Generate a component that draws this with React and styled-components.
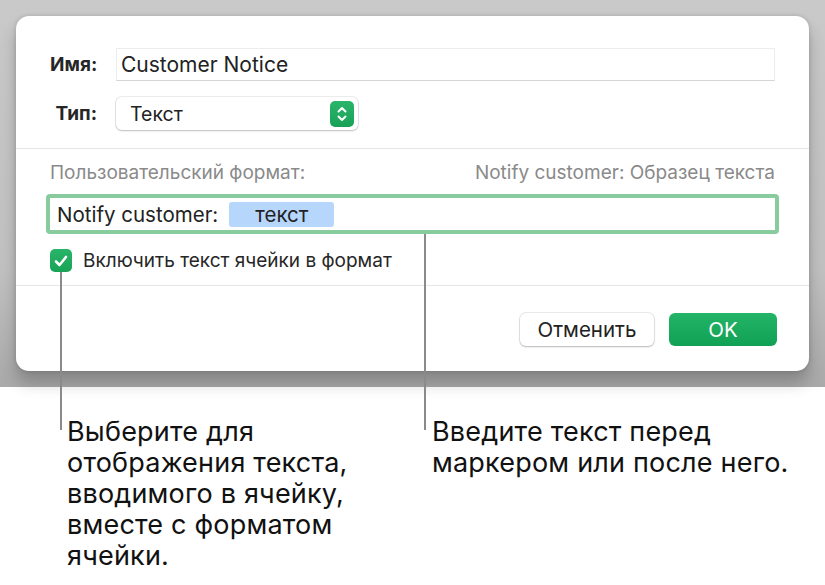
import React from "react";
import styled, { createGlobalStyle } from "styled-components";

const GlobalStyle = createGlobalStyle`
  html, body {
    margin: 0;
    padding: 0;
    background: #ffffff;
  }
  body {
    font-family: Inter, "Noto Sans", "Liberation Sans", sans-serif;
    color: #1d1d1d;
  }
`;

const Page = styled.div`
  position: relative;
  width: 825px;
  height: 585px;
  overflow: hidden;
  background: #ffffff;
`;

const Backdrop = styled.div`
  height: 387px;
  box-sizing: border-box;
  padding: 16px 16px 0 16px;
  background: linear-gradient(to bottom, #c9c9c9 0%, #c1c1c1 70%, #a9a9a9 100%);
`;

const Dialog = styled.div`
  width: 793px;
  height: 355px;
  box-sizing: border-box;
  background: #ffffff;
  border-radius: 13px;
  box-shadow: 0 12px 16px rgba(0, 0, 0, 0.22), 0 0 4px rgba(0, 0, 0, 0.16);
  display: flex;
  flex-direction: column;
  overflow: hidden;
`;

const Section = styled.div`
  padding: ${(p) => p.$pad};
  border-bottom: ${(p) => (p.$divider ? "1px solid #e6e6e6" : "none")};
`;

const FormGrid = styled.div`
  display: grid;
  grid-template-columns: 47px 1fr;
  column-gap: 19px;
  row-gap: 16px;
  align-items: center;
`;

const Label = styled.div`
  font-size: 19px;
  font-weight: 700;
  text-align: right;
  color: #262626;
  white-space: nowrap;
`;

const NameInput = styled.div`
  height: 33px;
  box-sizing: border-box;
  border: 1px solid #ececec;
  border-bottom-color: #d6d6d6;
  display: flex;
  align-items: center;
  padding-left: 4px;
  font-size: 21px;
  color: #222;
`;

const Popup = styled.div`
  width: 242px;
  height: 33px;
  box-sizing: border-box;
  border-radius: 6px;
  background: #fff;
  box-shadow: 0 0 0 1px rgba(0, 0, 0, 0.07), 0 1px 2px rgba(0, 0, 0, 0.2);
  display: flex;
  align-items: center;
  justify-content: space-between;
  padding: 0 4px 0 14px;
  font-size: 19.5px;
  color: #222;
`;

const Stepper = styled.div`
  width: 24px;
  height: 26px;
  border-radius: 5px;
  background: linear-gradient(to bottom, #2bb56a, #17a257);
  display: flex;
  align-items: center;
  justify-content: center;
`;

const HintRow = styled.div`
  display: flex;
  justify-content: space-between;
  font-size: 19px;
  line-height: 22px;
  color: #8a8a8a;
`;

const FormatField = styled.div`
  margin: 10px -4px 0 -4px;
  height: 40px;
  box-sizing: border-box;
  border: 4px solid #88cb9e;
  border-radius: 4px;
  display: flex;
  align-items: center;
  gap: 11px;
  padding-left: 7px;
  font-size: 20.5px;
  color: #222;
`;

const Token = styled.span`
  width: 105px;
  height: 25px;
  border-radius: 3px;
  background: #b6d6fc;
  display: inline-flex;
  align-items: center;
  justify-content: center;
  font-size: 20.5px;
  color: #222;
`;

const CheckRow = styled.label`
  display: flex;
  align-items: center;
  gap: 11px;
  margin-top: 15px;
  font-size: 19px;
  color: #262626;
`;

const CheckBox = styled.span`
  width: 22px;
  height: 23px;
  border-radius: 5px;
  background: linear-gradient(to bottom, #2ab468, #18a357);
  display: inline-flex;
  align-items: center;
  justify-content: center;
`;

const ButtonRow = styled.div`
  display: flex;
  justify-content: flex-end;
  gap: 15px;
`;

const Button = styled.button`
  height: 33px;
  width: ${(p) => p.$w}px;
  border: none;
  border-radius: 6px;
  font-family: inherit;
  font-size: 20.5px;
  cursor: pointer;
  background: ${(p) => (p.$primary ? "linear-gradient(to bottom, #24b467, #11a155)" : "#ffffff")};
  color: ${(p) => (p.$primary ? "#ffffff" : "#222")};
  box-shadow: ${(p) =>
    p.$primary ? "none" : "0 0 0 1px rgba(0, 0, 0, 0.08), 0 1px 2px rgba(0, 0, 0, 0.22)"};
`;

const Callouts = styled.div`
  display: flex;
  padding-top: 29px;
  font-size: 27px;
  letter-spacing: 0.2px;
  line-height: 31px;
  color: #111;
`;

const CalloutText = styled.div`
  margin-left: ${(p) => p.$left}px;
  width: ${(p) => p.$w}px;
  white-space: nowrap;
`;

const Leader = styled.div`
  position: absolute;
  width: 2px;
  background: #8a8a8a;
  left: ${(p) => p.$x}px;
  top: ${(p) => p.$top}px;
  height: ${(p) => p.$h}px;
`;

function StepperIcon() {
  return (
    <svg width="12" height="18" viewBox="0 0 12 18" fill="none">
      <path d="M2.5 6.5 L6 3 L9.5 6.5" stroke="#fff" strokeWidth="2" strokeLinecap="round" strokeLinejoin="round" />
      <path d="M2.5 11.5 L6 15 L9.5 11.5" stroke="#fff" strokeWidth="2" strokeLinecap="round" strokeLinejoin="round" />
    </svg>
  );
}

function CheckIcon() {
  return (
    <svg width="16" height="16" viewBox="0 0 16 16" fill="none">
      <path d="M3 8.5 L6.5 12 L13 4" stroke="#fff" strokeWidth="2.6" strokeLinecap="round" strokeLinejoin="round" />
    </svg>
  );
}

export default function App() {
  return (
    <Page>
      <GlobalStyle />
      <Backdrop>
        <Dialog>
          <Section $pad="32px 34px 18px 34px" $divider>
            <FormGrid>
              <Label>Имя:</Label>
              <NameInput>Customer Notice</NameInput>
              <Label>Тип:</Label>
              <Popup>
                <span>Текст</span>
                <Stepper>
                  <StepperIcon />
                </Stepper>
              </Popup>
            </FormGrid>
          </Section>
          <Section $pad="13px 34px 13px 34px" $divider>
            <HintRow>
              <span>Пользовательский формат:</span>
              <span>Notify customer: Образец текста</span>
            </HintRow>
            <FormatField>
              <span>Notify customer:</span>
              <Token>текст</Token>
            </FormatField>
            <CheckRow>
              <CheckBox>
                <CheckIcon />
              </CheckBox>
              <span>Включить текст ячейки в формат</span>
            </CheckRow>
          </Section>
          <Section $pad="27px 32px 25px 34px">
            <ButtonRow>
              <Button $w={134}>Отменить</Button>
              <Button $w={108} $primary>OK</Button>
            </ButtonRow>
          </Section>
        </Dialog>
      </Backdrop>
      <Callouts>
        <CalloutText $left={67} $w={300}>
          Выберите для
          <br />
          отображения текста,
          <br />
          вводимого в ячейку,
          <br />
          вместе с форматом
          <br />
          ячейки.
        </CalloutText>
        <CalloutText $left={65} $w={380}>
          Введите текст перед
          <br />
          маркером или после него.
        </CalloutText>
      </Callouts>
      <Leader $x={60} $top={272} $h={158} />
      <Leader $x={424} $top={234} $h={196} />
    </Page>
  );
}
